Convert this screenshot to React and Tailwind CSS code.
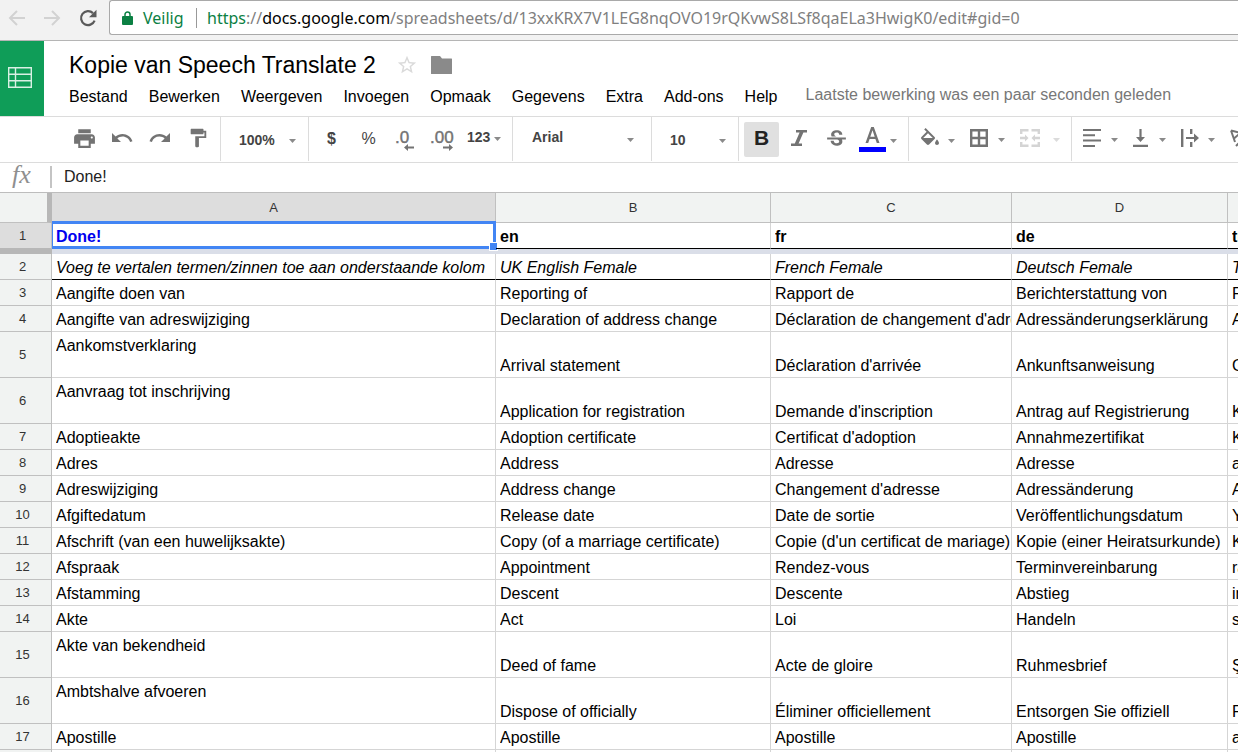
import React from "react";
import {
  MdPrint,
  MdUndo,
  MdRedo,
  MdFormatPaint,
  MdStrikethroughS,
  MdStarBorder,
} from "react-icons/md";

const MENUS = ["Bestand", "Bewerken", "Weergeven", "Invoegen", "Opmaak", "Gegevens", "Extra", "Add-ons", "Help"];

const COLUMNS = ["A", "B", "C", "D", "E"];

const ROWS = [
  ["Aangifte doen van", "Reporting of", "Rapport de", "Berichterstattung von", "Raporlama"],
  ["Aangifte van adreswijziging", "Declaration of address change", "Déclaration de changement d'adresse", "Adressänderungserklärung", "Adres değişikliği beyanı"],
  ["Aankomstverklaring", "Arrival statement", "Déclaration d'arrivée", "Ankunftsanweisung", "Geliş beyanı"],
  ["Aanvraag tot inschrijving", "Application for registration", "Demande d'inscription", "Antrag auf Registrierung", "Kayıt başvurusu"],
  ["Adoptieakte", "Adoption certificate", "Certificat d'adoption", "Annahmezertifikat", "Kabul belgesi"],
  ["Adres", "Address", "Adresse", "Adresse", "adres"],
  ["Adreswijziging", "Address change", "Changement d'adresse", "Adressänderung", "Adres değişikliği"],
  ["Afgiftedatum", "Release date", "Date de sortie", "Veröffentlichungsdatum", "Yayın tarihi"],
  ["Afschrift (van een huwelijksakte)", "Copy (of a marriage certificate)", "Copie (d'un certificat de mariage)", "Kopie (einer Heiratsurkunde)", "Kopya"],
  ["Afspraak", "Appointment", "Rendez-vous", "Terminvereinbarung", "randevu"],
  ["Afstamming", "Descent", "Descente", "Abstieg", "iniş"],
  ["Akte", "Act", "Loi", "Handeln", "senet"],
  ["Akte van bekendheid", "Deed of fame", "Acte de gloire", "Ruhmesbrief", "Şöhret belgesi"],
  ["Ambtshalve afvoeren", "Dispose of officially", "Éliminer officiellement", "Entsorgen Sie offiziell", "Resmen elden çıkarma"],
  ["Apostille", "Apostille", "Apostille", "Apostille", "apostil"],
  ["", "", "", "", ""],
];

const TALL_ROWS = [5, 6, 15, 16];

function Caret({ className = "" }) {
  return (
    <svg width="7" height="4" viewBox="0 0 7 4" className={`shrink-0 fill-[#8a8a8a] ${className}`} aria-hidden="true">
      <path d="M0 0h7L3.5 4z" />
    </svg>
  );
}

function Tool({ label, className = "", children, ...rest }) {
  return (
    <button type="button" aria-label={label} title={label} className={`flex h-[35px] shrink-0 items-center justify-center ${className}`} {...rest}>
      {children}
    </button>
  );
}

function Group({ className = "", children }) {
  return <div className={`flex h-[44px] shrink-0 items-center border-r border-[#dcdcdc] ${className}`}>{children}</div>;
}

function Picker({ label, value, options, className = "", caret = "" }) {
  return (
    <div className="relative flex grow items-center">
      <select aria-label={label} defaultValue={value} className={`h-[35px] w-full appearance-none bg-transparent text-[14px] font-bold outline-none ${className}`}>
        {options.map((o) => (
          <option key={o}>{o}</option>
        ))}
      </select>
      <Caret className={`pointer-events-none absolute ${caret}`} />
    </div>
  );
}

function BrowserBar() {
  return (
    <div className="flex h-[41px] shrink-0 items-start border-b border-[#b5b5b5] bg-[#f2f2f2]">
      <div className="flex h-[35px] w-[109px] shrink-0 items-center">
        <button type="button" aria-label="Terug" className="flex w-[34px] justify-center">
          <svg width="18" height="16" viewBox="0 0 18 16" fill="none" stroke="#d2d2d2" strokeWidth="2" aria-hidden="true">
            <path d="M17 8H2M9 1L2 8l7 7" />
          </svg>
        </button>
        <button type="button" aria-label="Vooruit" className="flex w-[36px] justify-center">
          <svg width="18" height="16" viewBox="0 0 18 16" fill="none" stroke="#d2d2d2" strokeWidth="2" aria-hidden="true">
            <path d="M1 8h15M9 1l7 7-7 7" />
          </svg>
        </button>
        <button type="button" aria-label="Vernieuwen" className="flex w-[35px] justify-center">
          <svg width="18" height="18" viewBox="0 0 18 18" fill="none" aria-hidden="true">
            <path d="M15.6 11.6A7 7 0 1 1 14 4.1" stroke="#5a5a5a" strokeWidth="2.2" />
            <path d="M17.5 0.8v7.4H10z" fill="#5a5a5a" />
          </svg>
        </button>
      </div>
      <div className="flex h-[35px] min-w-0 grow items-center overflow-hidden rounded-l-[3px] border border-r-0 border-[#a9a9a9] bg-white pl-3 font-['Noto_Sans','Open_Sans',sans-serif] text-[16px] whitespace-nowrap text-[#808080]">
        <svg width="11" height="14" viewBox="0 0 11 14" className="shrink-0" aria-hidden="true">
          <path d="M3 6V3.500a2.500 2.500 0 0 1 5 0V6" fill="none" stroke="#0b8043" strokeWidth="1.500" />
          <rect y="5" width="11" height="9" rx="1" fill="#0b8043" />
        </svg>
        <span className="w-[63px] shrink-0 pl-[10px] text-[#0b8043]">Veilig</span>
        <span className="h-[20px] w-px shrink-0 bg-[#999999]" />
        <div role="textbox" aria-label="Adres" tabIndex={0} className="pl-[10px]">
          <span className="text-[#0b8043]">https</span>://<span className="text-black">docs.google.com</span>
          /spreadsheets/d/13xxKRX7V1LEG8nqOVO19rQKvwS8LSf8qaELa3HwigK0/edit#gid=0
        </div>
      </div>
    </div>
  );
}

function DocHeader() {
  return (
    <header className="flex h-[75px] shrink-0">
      <a href="#home" aria-label="Spreadsheets" className="flex w-[44px] shrink-0 justify-center bg-[#0f9d58] pt-[26px] pr-[5px]">
        <svg width="24" height="21" viewBox="0 0 24 21" fill="none" stroke="#d9f0e4" strokeWidth="1.4" aria-hidden="true">
          <path d="M.7.7h22.6v19.6H.7zM7.5.7v19.6M.7 7.2h22.6M.7 13.7h22.6" />
        </svg>
      </a>
      <div className="min-w-0 grow pl-[25px]">
        <div className="flex h-[38px] items-center pt-[10px]">
          <h1 className="text-[23px] whitespace-nowrap">Kopie van Speech Translate 2</h1>
          <button type="button" aria-label="Ster" className="ml-5">
            <MdStarBorder size={22} className="text-[#dadada]" />
          </button>
          <button type="button" aria-label="Verplaatsen" className="ml-[13px]">
            <svg width="21" height="18" viewBox="0 0 21 18" className="fill-[#8a8a8a]" aria-hidden="true">
              <path d="M0 .5Q0 0 .5 0H9l2 2.500h9.500q.5 0 .5.500V17.500q0 .5-.5.5H.5q-.5 0-.5-.5z" />
            </svg>
          </button>
        </div>
        <nav className="flex h-[36px] items-center whitespace-nowrap">
          <ul className="flex gap-[21px]">
            {MENUS.map((m) => (
              <li key={m}>
                <button type="button">{m}</button>
              </li>
            ))}
          </ul>
          <a href="#revisions" className="ml-7 pb-1 text-[#777777]">
            Laatste bewerking was een paar seconden geleden
          </a>
        </nav>
      </div>
    </header>
  );
}

function Toolbar() {
  return (
    <div role="toolbar" aria-label="Opmaak" className="flex h-[47px] shrink-0 items-start overflow-hidden border-y border-[#dcdcdc] text-[#737373]">
      <Group className="w-[221px] pb-[2px] pl-[65px]">
        <Tool label="Afdrukken" className="w-[38px]"><MdPrint size={25} /></Tool>
        <Tool label="Ongedaan maken" className="w-[38px]"><MdUndo size={24} /></Tool>
        <Tool label="Opnieuw" className="w-[38px]"><MdRedo size={24} /></Tool>
        <Tool label="Opmaak kopiëren" className="w-[38px]"><MdFormatPaint size={22} /></Tool>
      </Group>
      <Group className="w-[88px] text-[#444444]">
        <Picker label="Zoomen" value="100%" options={["50%", "75%", "100%", "125%"]} className="pt-[3px] pl-[18px]" caret="top-[17px] right-[12px]" />
      </Group>
      <Group className="w-[204px] pl-1 text-[14px] text-[#444444]">
        <Tool label="Opmaken als valuta" className="w-[37px] text-[16px] font-bold">$</Tool>
        <Tool label="Opmaken als percentage" className="w-[37px] text-[16px]">%</Tool>
        <Tool label="Minder decimalen" className="w-[37px]">
          <svg width="21" height="24" viewBox="0 0 21 24" aria-hidden="true" className="fill-[#737373]">
            <text x="0" y="16" fontSize="17" fontFamily="Liberation Sans, sans-serif" stroke="#737373" strokeWidth=".4">.0</text>
            <path d="M9 20.500l4-3.500v2.500h6v2h-6v2.500z" />
          </svg>
        </Tool>
        <Tool label="Meer decimalen" className="w-[37px]">
          <svg width="25" height="24" viewBox="0 0 25 24" aria-hidden="true" className="fill-[#737373]">
            <text x="0" y="16" fontSize="17" fontFamily="Liberation Sans, sans-serif" stroke="#737373" strokeWidth=".4">.00</text>
            <path d="M23 20.500l-4-3.500v2.500h-6v2h6v2.500z" />
          </svg>
        </Tool>
        <Tool label="Meer indelingen" className="gap-1 pl-[6px] font-bold">
          <span className="pb-[3px]">123</span>
          <Caret />
        </Tool>
      </Group>
      <Group className="w-[139px] text-[#444444]">
        <Picker label="Lettertype" value="Arial" options={["Arial", "Calibri", "Verdana"]} className="pb-[3px] pl-[19px]" caret="top-[16px] right-[17px]" />
      </Group>
      <Group className="w-[87px] text-[#444444]">
        <Picker label="Lettergrootte" value="10" options={["8", "9", "10", "11", "12"]} className="pt-[3px] pl-[18px]" caret="top-[17px] right-[12px]" />
      </Group>
      <Group className="w-[170px] pl-[5px]">
        <Tool label="Vet" aria-pressed="true" className="w-[35px] rounded-[2px] bg-[#e0e0e0] pb-[2px] text-[21px] font-bold text-[#222222]">B</Tool>
        <Tool label="Cursief" className="w-[39px] pb-[2px]">
          <svg width="16" height="16" viewBox="0 0 16 16" aria-hidden="true" className="fill-[#737373]">
            <path d="M5 0h11v2.500h-3.600L7.600 13.500H11V16H0v-2.500h3.800L8.600 2.500H5z" />
          </svg>
        </Tool>
        <Tool label="Doorhalen" className="w-[36px]"><MdStrikethroughS size={25} /></Tool>
        <Tool label="Tekstkleur" className="gap-1 pl-[5px]">
          <svg width="27" height="25" viewBox="0 0 27 25" aria-hidden="true">
            <path d="M12.200 0h2.600l5.700 16h-2.700l-1.400-4H10.600l-1.400 4H6.500zM11.300 9.800h4.400L13.500 3.300z" className="fill-[#737373]" />
            <path d="M0 20h27v5H0z" className="fill-[#0000ff]" />
          </svg>
          <Caret className="mt-1" />
        </Tool>
      </Group>
      <Group className="w-[163px] gap-[15px] pl-3">
        <Tool label="Vulkleur" className="gap-[9px]">
          <svg width="18" height="17" viewBox="3 0 18 17" aria-hidden="true" className="mb-[6px] fill-[#737373]">
            <path d="M16.560 8.940L7.620 0 6.210 1.410l2.380 2.380-5.150 5.150c-.59.59-.59 1.540 0 2.120l5.500 5.500c.29.29.68.44 1.060.44s.77-.15 1.060-.44l5.500-5.500c.59-.58.59-1.530 0-2.120zM5.210 10L10 5.210 14.790 10H5.210zM19 11.500s-2 2.170-2 3.500c0 1.100.9 2 2 2s2-.9 2-2c0-1.330-2-3.500-2-3.500z" />
          </svg>
          <Caret className="mt-[3px]" />
        </Tool>
        <Tool label="Randen" className="gap-[10px]">
          <svg width="18" height="18" viewBox="0 0 18 18" fill="none" stroke="#737373" strokeWidth="2.400" aria-hidden="true" className="mb-[2px]">
            <path d="M1.200 1.200h15.600v15.600H1.200zM9 1v16M1 9h16" />
          </svg>
          <Caret className="mt-[2px]" />
        </Tool>
        <Tool label="Cellen samenvoegen" className="gap-[13px] opacity-30" disabled>
          <svg width="20" height="18" viewBox="0 0 20 18" fill="none" stroke="#737373" strokeWidth="2.400" aria-hidden="true" className="mb-[2px]">
            <path d="M8.500 1.200H1.200V5M11.500 1.200h7.300V5M8.500 16.800H1.200V13M11.500 16.800h7.300V13M0 9h6M20 9h-6" />
            <path d="M5 5.500L8.500 9 5 12.500zM15 5.500L11.500 9l3.500 3.500z" className="fill-[#737373]" stroke="none" />
          </svg>
          <Caret className="mt-[2px]" />
        </Tool>
      </Group>
      <div className="flex h-[44px] shrink-0 items-center gap-[15px] pl-[11px]">
        <Tool label="Horizontaal uitlijnen" className="gap-[10px]">
          <svg width="18" height="18" viewBox="0 0 18 18" className="mb-[2px] fill-[#737373]" aria-hidden="true">
            <path d="M0 0h18v2H0zM0 5.300h12v2H0zM0 10.600h18v2H0zM0 16h12v2H0z" />
          </svg>
          <Caret className="mt-[2px]" />
        </Tool>
        <Tool label="Verticaal uitlijnen" className="gap-[11px]">
          <svg width="15" height="18" viewBox="0 0 15 18" className="mb-[2px] fill-[#737373]" aria-hidden="true">
            <path d="M6.400 0h2.200v8H12l-4.500 5L3 8h3.400zM0 15.700h15V18H0z" />
          </svg>
          <Caret className="mt-[2px]" />
        </Tool>
        <Tool label="Tekstterugloop" className="gap-[9px]">
          <svg width="18" height="18" viewBox="0 0 18 18" className="mb-[2px] fill-[#737373]" aria-hidden="true">
            <path d="M0 0h2.400v18H0zM9 0h2.400v5H9zM9 13h2.400v5H9zM5 8h8V4.500L18 9l-5 4.500V10H5z" />
          </svg>
          <Caret className="mt-[2px]" />
        </Tool>
        <Tool label="Tekst draaien">
          <svg width="20" height="18" viewBox="0 0 20 18" fill="none" stroke="#737373" strokeWidth="2" aria-hidden="true" className="mb-[2px]">
            <path d="M1 1.500l12 3M1 1.500l4 11.500M10.500 3.800L4 9.500M6 17L17 6M17 11V6h-5" />
          </svg>
        </Tool>
      </div>
    </div>
  );
}

function FormulaBar() {
  return (
    <div className="flex h-[30px] shrink-0 items-center border-b border-[#bdbdbd] pb-[2px]">
      <label htmlFor="formula" className="flex h-[22px] w-[52px] shrink-0 items-center border-r-2 border-[#c4c4c4] pb-1 pl-[12px] font-['Liberation_Serif',serif] text-[26px] text-[#8f8f8f] italic">
        fx
      </label>
      <input id="formula" defaultValue="Done!" className="h-[24px] min-w-0 grow bg-transparent pl-3 text-[#222222] outline-none" />
    </div>
  );
}

function Cell({ children, className = "", black = false, top = false }) {
  return (
    <td className={`relative overflow-hidden border-r border-b py-0 pr-0 pl-1 whitespace-nowrap ${black ? "border-r-[#d5d5d5] border-b-black" : "border-[#d5d5d5]"} ${top ? "align-top" : "align-bottom"} ${className}`}>
      <div className="h-[25px] overflow-hidden leading-[27px]">{children}</div>
    </td>
  );
}

const ROW_HEAD = "border-r border-b border-[#c0c0c0] bg-[#f1f3f2] pr-[6px] text-center text-[13px] font-normal text-[#333333]";

function Sheet() {
  return (
    <main className="min-h-0 grow overflow-hidden">
      <table className="w-[1468px] table-fixed border-separate border-spacing-0">
        <colgroup>
          <col className="w-[52px]" />
          <col className="w-[444px]" />
          <col className="w-[275px]" />
          <col className="w-[241px]" />
          <col className="w-[216px]" />
          <col className="w-[240px]" />
        </colgroup>
        <thead>
          <tr className="h-[30px]">
            <td className="border-r-5 border-b border-r-[#b7b7b7] border-b-[#c0c0c0] bg-[#f1f3f2]" />
            {COLUMNS.map((c) => (
              <th key={c} scope="col" className={`border-r border-b border-[#c0c0c0] p-0 text-[13px] font-normal text-[#333333] ${c === "A" ? "bg-[#dddddd]" : "bg-[#f1f3f2]"}`}>
                {c}
              </th>
            ))}
          </tr>
        </thead>
        <tbody>
          <tr className="h-[26px] font-bold">
            <th scope="row" className="border-r border-b border-r-[#c0c0c0] border-b-[#b7b7b7] bg-[#dddddd] pr-[6px] text-center text-[13px] font-normal text-[#333333]">1</th>
            <td className="relative border-r border-b border-r-[#d5d5d5] border-b-black py-0 pr-0 pl-1 align-bottom text-[#0000ee]">
              <div className="h-[25px] leading-[27px]">Done!</div>
              <span className="absolute -top-[2px] -right-px -bottom-px left-0 border-3 border-l-1 border-[#4285f4]" />
              <span className="absolute -right-[3px] -bottom-[3px] size-[9px] border border-white bg-[#4285f4]" />
            </td>
            <Cell black>en</Cell>
            <Cell black>fr</Cell>
            <Cell black>de</Cell>
            <Cell black>tr</Cell>
          </tr>
          <tr className="h-[5px]" aria-hidden="true">
            <td className="bg-[#b7b7b7] p-0" />
            <td colSpan={5} className="bg-[#dadee8] p-0" />
          </tr>
          <tr className="h-[26px] italic">
            <th scope="row" className={`${ROW_HEAD} not-italic`}>2</th>
            <Cell black>Voeg te vertalen termen/zinnen toe aan onderstaande kolom</Cell>
            <Cell black>UK English Female</Cell>
            <Cell black>French Female</Cell>
            <Cell black>Deutsch Female</Cell>
            <Cell black>Turkish Female</Cell>
          </tr>
          {ROWS.map((row, i) => {
            const n = i + 3;
            const tall = TALL_ROWS.includes(n);
            return (
              <tr key={n} className={tall ? "h-[46px]" : "h-[26px]"}>
                <th scope="row" className={ROW_HEAD}>{n}</th>
                {row.map((text, c) => (
                  <Cell key={c} top={c === 0}>{text}</Cell>
                ))}
              </tr>
            );
          })}
        </tbody>
      </table>
    </main>
  );
}

export default function App() {
  return (
    <div className="flex h-screen flex-col overflow-hidden bg-white font-['Liberation_Sans',Arial,sans-serif] text-[16px] text-black">
      <BrowserBar />
      <DocHeader />
      <Toolbar />
      <FormulaBar />
      <Sheet />
    </div>
  );
}
